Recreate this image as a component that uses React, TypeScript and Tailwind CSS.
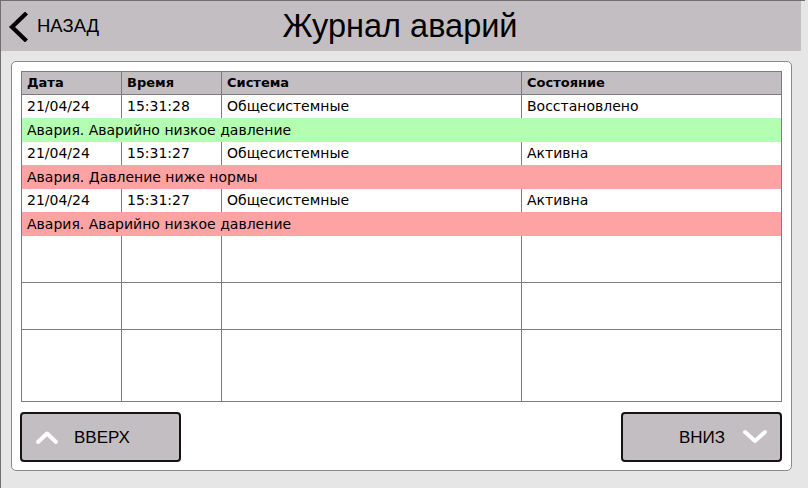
import React from "react";

type Tone = "ok" | "alarm";

interface LogEntry {
  date: string;
  time: string;
  system: string;
  state: string;
  message: string;
  tone: Tone;
}

const entries: LogEntry[] = [
  {
    date: "21/04/24",
    time: "15:31:28",
    system: "Общесистемные",
    state: "Восстановлено",
    message: "Авария. Аварийно низкое давление",
    tone: "ok",
  },
  {
    date: "21/04/24",
    time: "15:31:27",
    system: "Общесистемные",
    state: "Активна",
    message: "Авария. Давление ниже нормы",
    tone: "alarm",
  },
  {
    date: "21/04/24",
    time: "15:31:27",
    system: "Общесистемные",
    state: "Активна",
    message: "Авария. Аварийно низкое давление",
    tone: "alarm",
  },
];

const cols = "grid grid-cols-[100px_100px_300px_1fr]";
const cellFont = "font-['DejaVu_Sans',sans-serif]";

function ChevronLeft() {
  return (
    <svg width="22" height="30" viewBox="0 0 22 30" className="block">
      <polyline
        points="18,2.5 5,15 18,27.5"
        fill="none"
        stroke="#000"
        strokeWidth="4.2"
        strokeLinecap="square"
        strokeLinejoin="miter"
      />
    </svg>
  );
}

function ChevronUp() {
  return (
    <svg width="24" height="16" viewBox="0 0 24 16" className="block">
      <polyline
        points="3,13 12,4.5 21,13"
        fill="none"
        stroke="#fff"
        strokeWidth="4"
        strokeLinecap="round"
        strokeLinejoin="round"
      />
    </svg>
  );
}

function ChevronDown() {
  return (
    <svg width="26" height="16" viewBox="0 0 26 16" className="block">
      <polyline
        points="3,3 13,12 23,3"
        fill="none"
        stroke="#fff"
        strokeWidth="4"
        strokeLinecap="round"
        strokeLinejoin="round"
      />
    </svg>
  );
}

function Cell({ children, last }: { children?: React.ReactNode; last?: boolean }) {
  return (
    <div
      className={`flex items-center pl-[5px] overflow-hidden whitespace-nowrap ${
        last ? "" : "border-r border-[#7c7c7c]"
      }`}
    >
      {children}
    </div>
  );
}

export default function App() {
  return (
    <div className="w-[808px] h-[488px] bg-[#e6e6e6] border-l border-[#6f6f6f] overflow-hidden flex flex-col">
      {/* top rule */}
      <div className="h-px w-[804px] bg-[#6f6f6f]" />

      {/* title bar */}
      <header className="w-[800px] h-[50px] bg-[#c3bec2] grid grid-cols-[1fr_auto_1fr] items-center font-['Liberation_Sans',Arial,sans-serif] text-black">
        <button className="flex items-center gap-[8px] pl-[6px] pt-[1px] justify-self-start">
          <ChevronLeft />
          <span className="text-[18.5px] leading-none">НАЗАД</span>
        </button>
        <h1 className="text-[32.5px] leading-none -ml-[2px]">Журнал аварий</h1>
        <div />
      </header>

      {/* content panel */}
      <main className="ml-[10px] mt-[10px] w-[781px] h-[410px] bg-white border border-[#8a8a8a] rounded-[5px] p-[9px] pb-[8px] flex flex-col">
        <div className={`h-[331px] border border-[#7c7c7c] flex flex-col text-black ${cellFont}`}>
          {/* column headings */}
          <div className={`${cols} h-[23px] bg-[#c3bec2] border-b border-[#7c7c7c] text-[13px] font-bold`}>
            <Cell>Дата</Cell>
            <Cell>Время</Cell>
            <Cell>Система</Cell>
            <Cell last>Состояние</Cell>
          </div>

          {entries.map((e, i) => (
            <React.Fragment key={i}>
              <div className={`${cols} h-[23px] text-[14px]`}>
                <Cell>{e.date}</Cell>
                <Cell>{e.time}</Cell>
                <Cell>{e.system}</Cell>
                <Cell last>{e.state}</Cell>
              </div>
              <div
                className={`h-[24px] flex items-center pl-[5px] text-[14px] whitespace-nowrap ${
                  e.tone === "ok" ? "bg-[#b4feb1]" : "bg-[#fea3a3]"
                }`}
              >
                {e.message}
              </div>
            </React.Fragment>
          ))}

          {/* empty slots */}
          <div className={`${cols} h-[47px] border-b border-[#7c7c7c]`}>
            <Cell />
            <Cell />
            <Cell />
            <Cell last />
          </div>
          <div className={`${cols} h-[47px] border-b border-[#7c7c7c]`}>
            <Cell />
            <Cell />
            <Cell />
            <Cell last />
          </div>
          <div className={`${cols} flex-1`}>
            <Cell />
            <Cell />
            <Cell />
            <Cell last />
          </div>
        </div>

        {/* paging */}
        <div className="mt-[10px] flex justify-between font-['Liberation_Sans',Arial,sans-serif] text-black">
          <button className="-ml-px w-[161px] h-[50px] bg-[#c3bec2] border-2 border-[#141414] rounded-[4px] flex items-center pl-[13px]">
            <ChevronUp />
            <span className="ml-[15px] text-[17px] leading-none">ВВЕРХ</span>
          </button>
          <button className="w-[161px] h-[50px] bg-[#c3bec2] border-2 border-[#141414] rounded-[4px] flex items-center justify-end pr-[12px]">
            <span className="mr-[17px] text-[17px] leading-none">ВНИЗ</span>
            <ChevronDown />
          </button>
        </div>
      </main>
    </div>
  );
}
